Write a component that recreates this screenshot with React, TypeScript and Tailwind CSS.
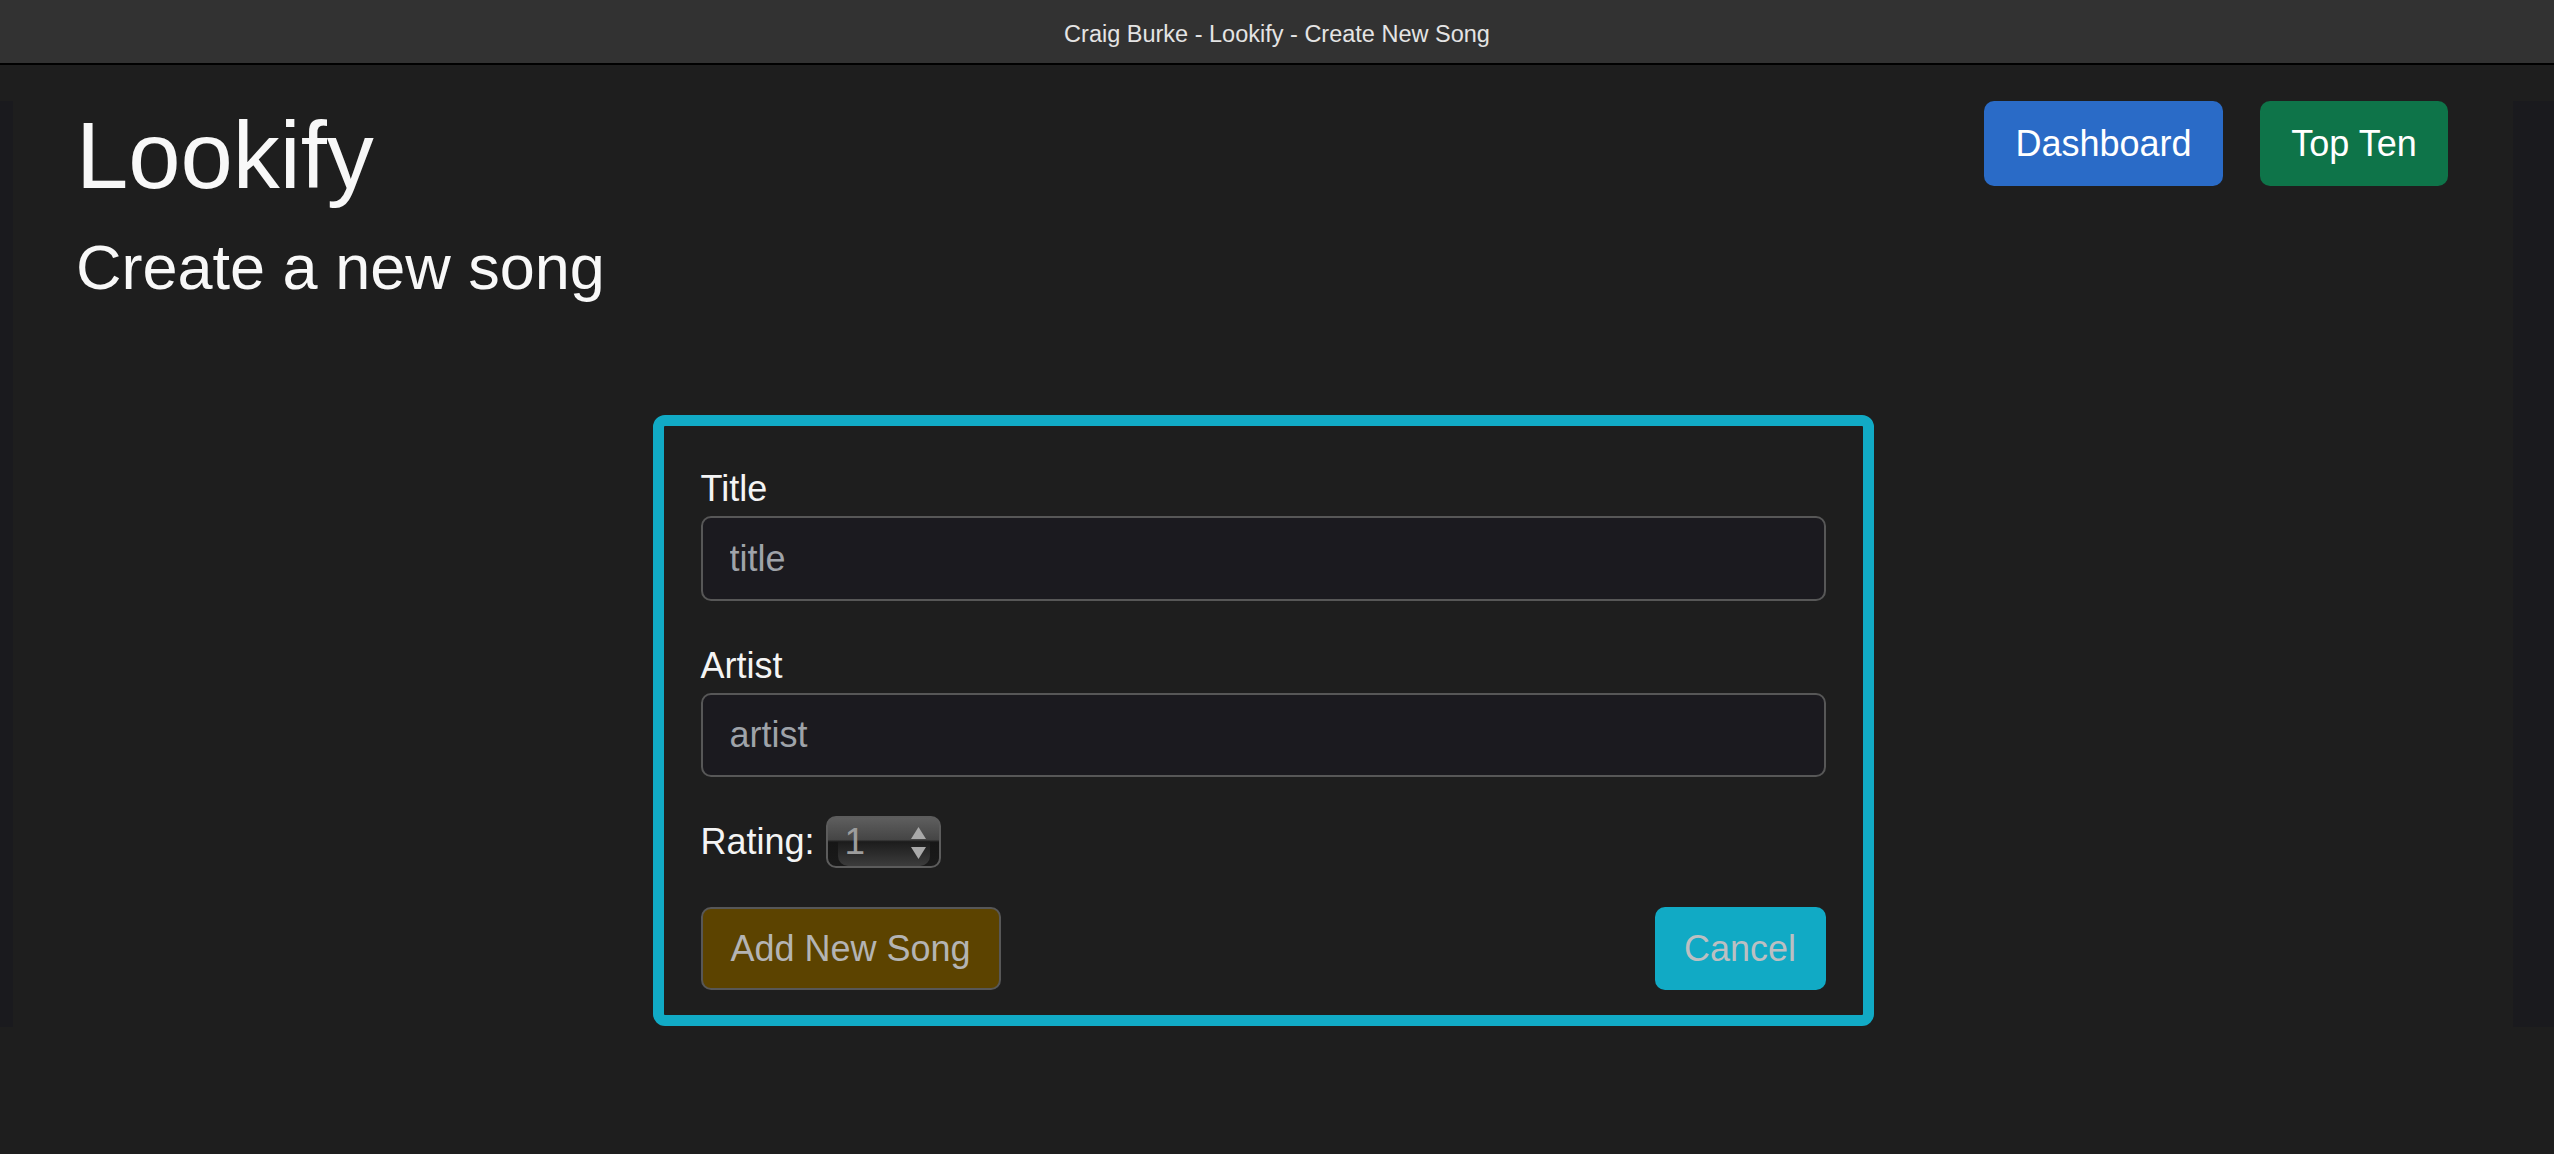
import React from "react";

function NumberSpinner() {
  return (
    <div className="relative w-[115px] h-[52px] rounded-[10px] border-2 border-[#5c5c5c] overflow-hidden bg-[linear-gradient(to_bottom,#5e5e5e_0%,#454545_45%,#161616_50%,#1a1a1a_100%)]">
      <div className="absolute left-[10px] right-[9px] top-[24px] bottom-0 rounded-b-[10px] bg-[linear-gradient(to_bottom,#1c1c1c,#3c3c3c)]" />
      <span className="absolute left-[17px] top-[2px] text-[37px] leading-[44px] text-[#9d9d9d]">1</span>
      <svg className="absolute left-[82px] top-[9px]" width="17" height="33" viewBox="0 0 17 33">
        <polygon points="8.5,0 16,12 1,12" fill="#a9a9a9" />
        <polygon points="1,20 16,20 8.5,32" fill="#a9a9a9" />
      </svg>
    </div>
  );
}

export default function App() {
  return (
    <div className="min-h-screen bg-[#1e1e1e] font-['Liberation_Sans',Arial,sans-serif]">
      <div className="h-[65px] bg-[#323232] border-b-2 border-black flex items-center justify-center pt-[6px] text-[23.5px] text-[#e4e4e4]">
        Craig Burke - Lookify - Create New Song
      </div>
      <div className="mt-[36px] flex h-[926px] bg-[#1a1a1e]">
        <div className="ml-[13px] mr-[41px] flex-1 bg-[#1e1e1e] pl-[63px] pr-[65px] flex flex-col">
          <div className="flex justify-between items-start">
            <div className="flex flex-col">
              <h1 className="m-0 text-[94px] leading-[110px] text-[#f8f8f8] font-normal">Lookify</h1>
              <h2 className="mt-[18px] text-[63px] leading-[77px] text-[#f8f8f8] font-normal">Create a new song</h2>
            </div>
            <div className="flex gap-[37px]">
              <button className="w-[239px] h-[85px] rounded-[10px] bg-[#2a6bc7] text-white text-[36px]">Dashboard</button>
              <button className="w-[188px] h-[85px] rounded-[10px] bg-[#0e7449] text-white text-[36px]">Top Ten</button>
            </div>
          </div>
          <div className="mt-[109px] flex justify-center pl-[2px]">
            <form className="w-[1221px] border-[11px] border-[#11aac5] rounded-[12px] px-[37px] pt-[36px] pb-[25px] flex flex-col">
              <label className="text-[36px] leading-[54px] text-[#f4f4f4]">Title</label>
              <input
                placeholder="title"
                className="h-[85px] w-full rounded-[10px] border-2 border-[#575757] bg-[#1b1a1f] px-[27px] text-[36px] text-[#dcdcdc] placeholder:text-[#9fa3a9] outline-none"
              />
              <label className="mt-[38px] text-[36px] leading-[54px] text-[#f4f4f4]">Artist</label>
              <input
                placeholder="artist"
                className="h-[84px] w-full rounded-[10px] border-2 border-[#575757] bg-[#1b1a1f] px-[27px] text-[36px] text-[#dcdcdc] placeholder:text-[#9fa3a9] outline-none"
              />
              <div className="mt-[39px] flex items-center gap-[11px] h-[52px]">
                <span className="text-[36px] leading-[54px] text-[#f4f4f4]">Rating:</span>
                <NumberSpinner />
              </div>
              <div className="mt-[39px] flex justify-between">
                <button type="button" className="h-[83px] w-[300px] rounded-[10px] border-2 border-[#575757] bg-[#5c4300] text-[36px] text-[#b4b4b4]">
                  Add New Song
                </button>
                <button type="button" className="h-[83px] w-[171px] rounded-[10px] bg-[#11aac5] text-[36px] text-[#bcbfc2]">
                  Cancel
                </button>
              </div>
            </form>
          </div>
        </div>
      </div>
    </div>
  );
}
